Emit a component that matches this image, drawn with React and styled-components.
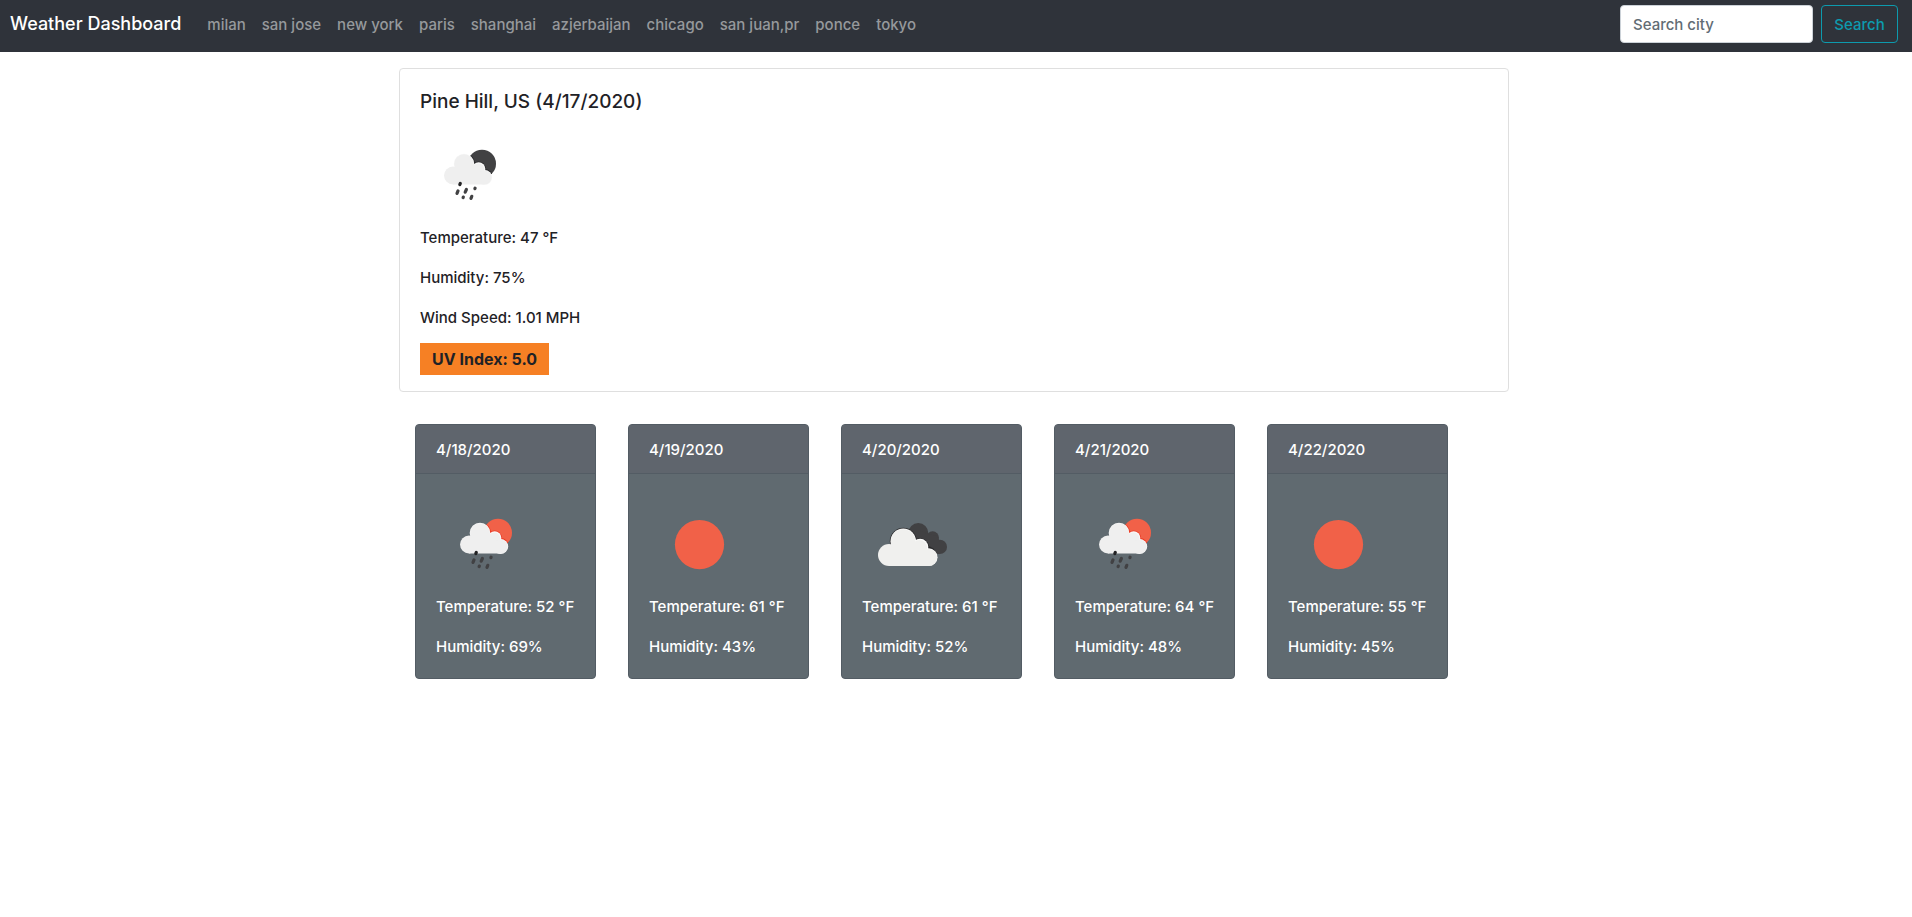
import React from "react";
import styled, { createGlobalStyle } from "styled-components";

const GlobalStyle = createGlobalStyle`
  *, *::before, *::after { box-sizing: border-box; }
  body {
    margin: 0;
    background: #fff;
    color: #1f2226;
    font-family: Inter, "Liberation Sans", sans-serif;
    font-size: 15px;
    font-weight: 500;
    line-height: 24px;
  }
`;

const Navbar = styled.nav`
  display: flex;
  flex-wrap: wrap;
  align-items: center;
  padding: 5px 14px 9px 10px;
  background: #2f333a;
`;

const Brand = styled.a`
  margin-right: 26px;
  color: #fff;
  font-size: 18px;
  text-decoration: none;
  white-space: nowrap;
`;

const CityList = styled.ul`
  display: flex;
  flex-wrap: wrap;
  gap: 16px;
  margin: 0;
  padding: 2px 0 0;
  list-style: none;
`;

const CityLink = styled.a`
  color: #96999c;
  text-decoration: none;
  white-space: nowrap;
`;

const SearchForm = styled.form`
  display: flex;
  gap: 8px;
  margin-left: auto;
`;

const SearchInput = styled.input`
  width: 193px;
  height: 38px;
  padding: 6px 12px;
  border: 1px solid #ccd2d8;
  border-radius: 4px;
  background: #fff;
  color: #495057;
  font: inherit;

  &::placeholder {
    color: #626c74;
    opacity: 1;
  }
`;

const SearchButton = styled.button`
  width: 77px;
  height: 38px;
  padding: 2px 0 0;
  border: 1px solid #0d9bae;
  border-radius: 4px;
  background: transparent;
  color: #0d9bae;
  font: inherit;
  cursor: pointer;
`;

const Page = styled.main`
  max-width: 1114px;
  margin: 16px auto 0;
  padding-right: 4px;
`;

const CurrentCard = styled.section`
  padding: 20px 20px 16px;
  border: 1px solid #dfdfdf;
  border-radius: 4px;
`;

const CardTitle = styled.h1`
  margin: 0 0 12px;
  padding-top: 2px;
  font-size: 19px;
  font-weight: 500;
  line-height: 22px;
`;

const Reading = styled.p`
  margin: 0;
  padding-top: 2px;
  line-height: 22px;
  white-space: nowrap;

  & + & { margin-top: 16px; }
`;

const UvBadge = styled.strong`
  display: block;
  width: fit-content;
  margin-top: 14px;
  padding: 4px 12px;
  background: #f68024;
  font-size: 16px;
  font-weight: 700;
`;

const Forecast = styled.div`
  display: flex;
  flex-wrap: wrap;
  gap: 32px;
  padding: 32px 16px;
`;

const DayCard = styled.article`
  width: 181px;
  border: 1px solid #535c64;
  border-radius: 4px;
  background: #606a70;
  color: #fff;
`;

const DayHeader = styled.h2`
  margin: 0;
  padding: 14px 20px 12px;
  border-bottom: 1px solid #535c64;
  border-radius: 3px 3px 0 0;
  background: #5f656d;
  font-size: 15px;
  font-weight: 500;
  line-height: 22px;
`;

const DayBody = styled.div`
  padding: 20px;
`;

const Icon = styled.svg`
  display: block;
  width: 100px;
  height: 100px;
`;

function RainIcon({ night, id }) {
  const disc = night ? "#414143" : "#f16148";
  const edge = night ? "#2a2a2c" : "#ea3a24";
  return (
    <Icon viewBox="0 0 100 100" role="img" aria-label="Rain">
      <clipPath id={id}>
        <circle cx="62" cy="38.7" r="14" />
      </clipPath>
      <circle cx="62" cy="38.7" r="14" fill={disc} />
      <g clipPath={`url(#${id})`} fill={edge}>
        <circle cx="44" cy="39" r="11" />
        <circle cx="58.7" cy="44" r="7.4" />
        <circle cx="64.6" cy="52.5" r="8.5" />
      </g>
      <g fill="#f8f8f8">
        <circle cx="44" cy="39" r="10.3" />
        <circle cx="58.7" cy="44" r="6.7" />
        <circle cx="64.6" cy="52.5" r="7.6" />
      </g>
      <g fill="#efefef">
        <circle cx="33" cy="50.5" r="9" />
        <circle cx="44" cy="39" r="9.8" />
        <circle cx="58.3" cy="44.5" r="6" />
        <circle cx="64.5" cy="52.5" r="7.1" />
        <path d="M33 59.5V45l5-6h15l6 5 5 6v9.5z" />
      </g>
      <g stroke="#414143" strokeWidth="3.2" strokeLinecap="round">
        <path d="M40.3 58.4L39.8 59.6" stroke="#222224" />
        <path d="M38 65.9L37 68.4" />
        <path d="M46.4 64.5L45.2 67.2" />
        <path d="M55.1 63.2L54.9 63.7" />
        <path d="M43.3 72.1L43.1 72.6" />
        <path d="M51.8 71.3L51 73.4" />
      </g>
    </Icon>
  );
}

function SunIcon() {
  return (
    <Icon viewBox="0 0 100 100" role="img" aria-label="Clear sky">
      <circle cx="50.5" cy="50.6" r="24.6" fill="#f16148" />
    </Icon>
  );
}

function CloudsIcon() {
  return (
    <Icon viewBox="0 0 100 100" role="img" aria-label="Broken clouds">
      <g fill="#414143">
        <circle cx="56.3" cy="39" r="10" />
        <circle cx="70.6" cy="43.7" r="6.4" />
        <circle cx="77.8" cy="52.9" r="7.2" />
        <path d="M56 60V36l10 4 9 2 3 6v12z" />
      </g>
      <g fill="#29292b">
        <circle cx="41.3" cy="47.2" r="13.5" />
        <circle cx="58" cy="53.2" r="9" />
        <path d="M58 60v-9h7l6.5 3.6 2.5 4z" />
      </g>
      <g fill="#fbfbfa">
        <circle cx="41.3" cy="47.2" r="12.7" />
        <circle cx="58.1" cy="53" r="8.2" />
        <circle cx="66.6" cy="63.2" r="8.9" />
      </g>
      <g fill="#f0f0ee">
        <circle cx="27" cy="61" r="11" />
        <circle cx="41" cy="47.5" r="12.2" />
        <circle cx="57.5" cy="53.7" r="7.6" />
        <circle cx="66.5" cy="63.4" r="8.6" />
        <path d="M27 72V54l6-6h21l8 5 4 6v13z" />
      </g>
    </Icon>
  );
}

const cities = [
  "milan",
  "san jose",
  "new york",
  "paris",
  "shanghai",
  "azjerbaijan",
  "chicago",
  "san juan,pr",
  "ponce",
  "tokyo",
];

const days = [
  { date: "4/18/2020", sky: "rain", temp: 52, humidity: 69 },
  { date: "4/19/2020", sky: "sun", temp: 61, humidity: 43 },
  { date: "4/20/2020", sky: "clouds", temp: 61, humidity: 52 },
  { date: "4/21/2020", sky: "rain", temp: 64, humidity: 48 },
  { date: "4/22/2020", sky: "sun", temp: 55, humidity: 45 },
];

function SkyIcon({ sky, id }) {
  if (sky === "rain") return <RainIcon id={id} />;
  if (sky === "clouds") return <CloudsIcon />;
  return <SunIcon />;
}

export default function App() {
  return (
    <>
      <GlobalStyle />
      <Navbar>
        <Brand href="#">Weather Dashboard</Brand>
        <CityList>
          {cities.map((city) => (
            <li key={city}>
              <CityLink href="#">{city}</CityLink>
            </li>
          ))}
        </CityList>
        <SearchForm onSubmit={(event) => event.preventDefault()}>
          <SearchInput type="search" placeholder="Search city" aria-label="Search city" />
          <SearchButton type="submit">Search</SearchButton>
        </SearchForm>
      </Navbar>
      <Page>
        <CurrentCard>
          <CardTitle>Pine Hill, US (4/17/2020)</CardTitle>
          <RainIcon night id="moon" />
          <Reading>Temperature: 47 °F</Reading>
          <Reading>Humidity: 75%</Reading>
          <Reading>Wind Speed: 1.01 MPH</Reading>
          <UvBadge>UV Index: 5.0</UvBadge>
        </CurrentCard>
        <Forecast>
          {days.map((day, index) => (
            <DayCard key={day.date}>
              <DayHeader>{day.date}</DayHeader>
              <DayBody>
                <SkyIcon sky={day.sky} id={`sun-${index}`} />
                <Reading>Temperature: {day.temp} °F</Reading>
                <Reading>Humidity: {day.humidity}%</Reading>
              </DayBody>
            </DayCard>
          ))}
        </Forecast>
      </Page>
    </>
  );
}
